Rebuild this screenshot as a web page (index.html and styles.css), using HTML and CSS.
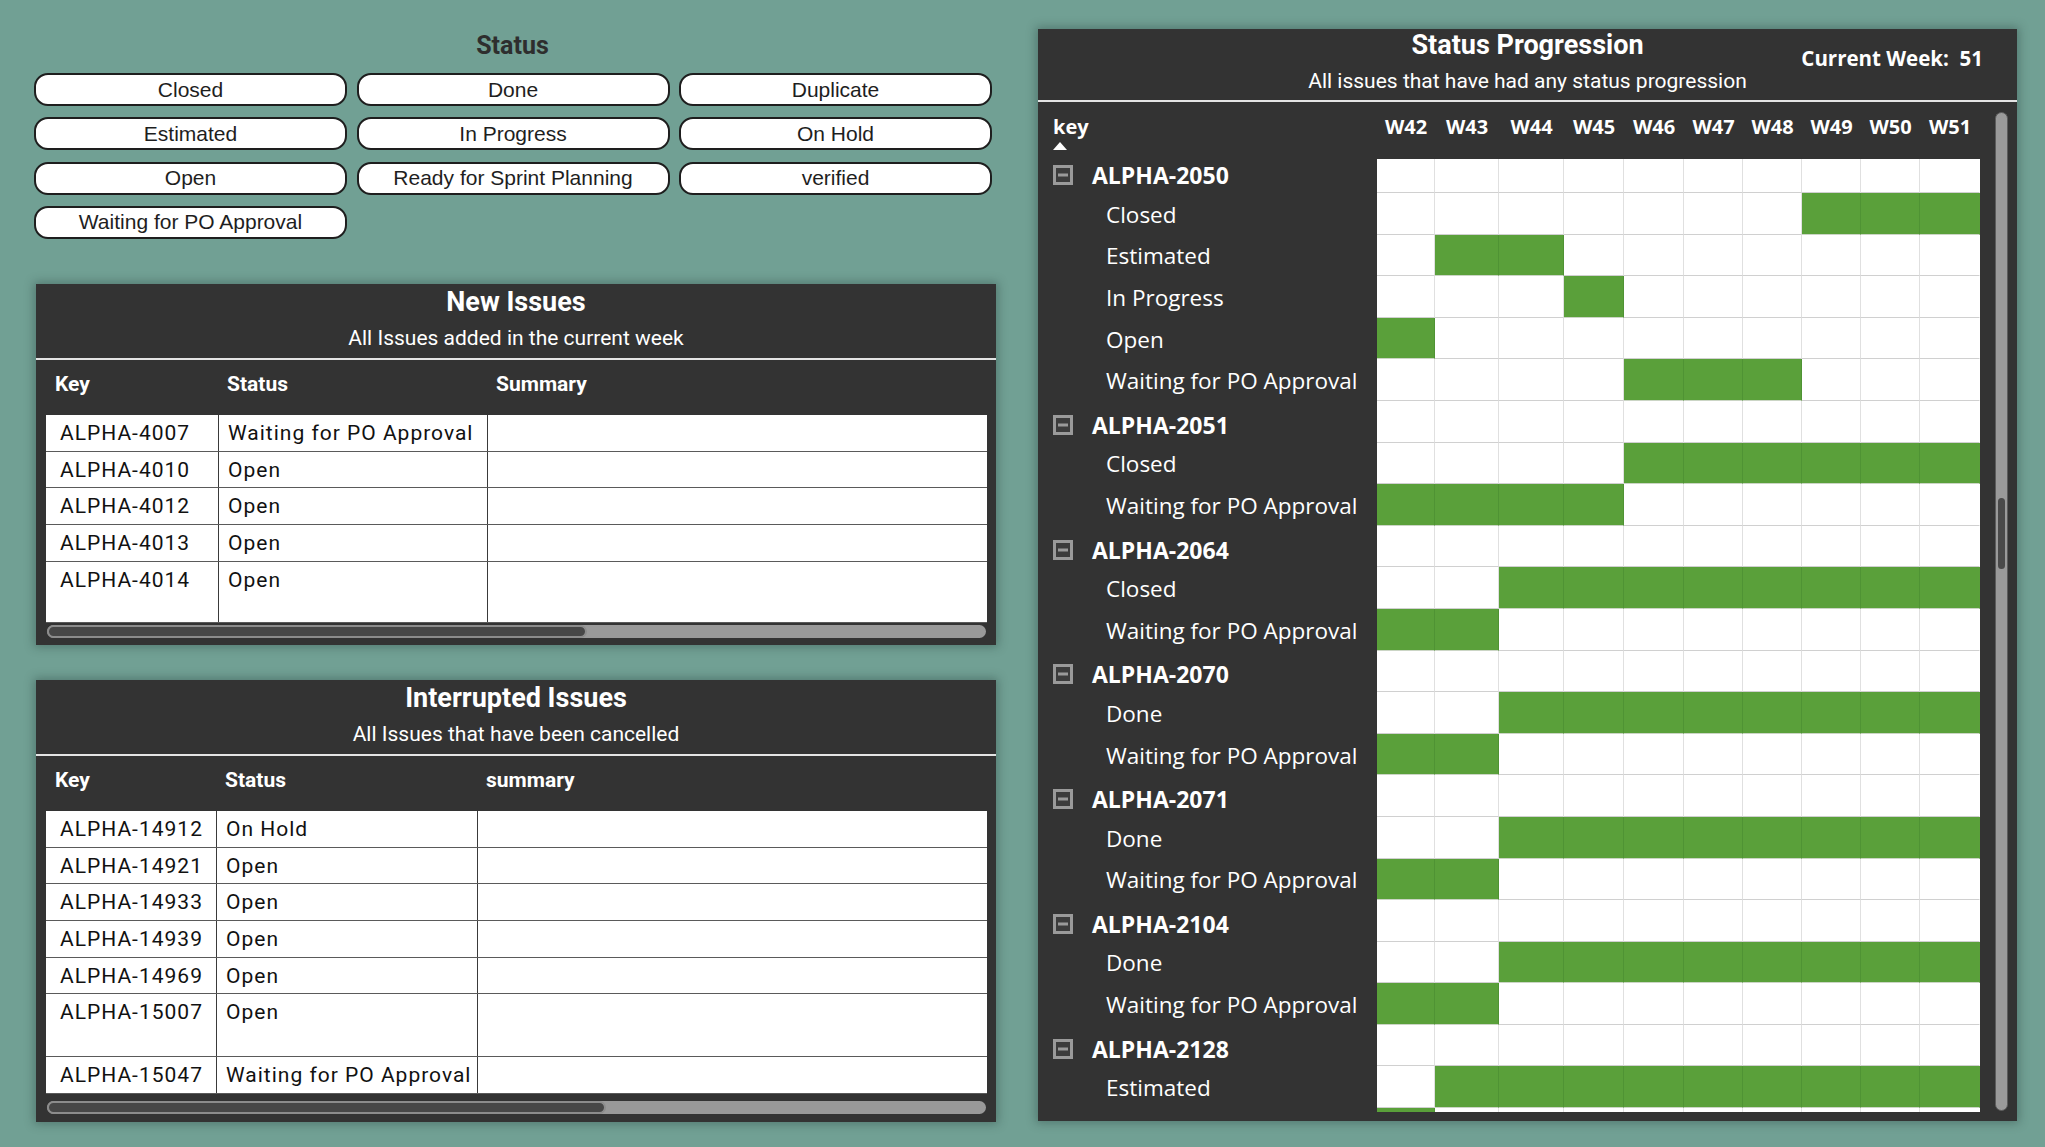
FILE: index.html
```html
<!DOCTYPE html>
<html>
<head>
<meta charset="utf-8">
<title>Status Dashboard</title>
<link rel="stylesheet" href="styles.css">
</head>
<body>
<div class="page">
  <div class="left">
    <section class="slicer">
      <h2 class="slicer-title">Status</h2>
      <div class="chips">
        <div class="chip">Closed</div>
        <div class="chip">Done</div>
        <div class="chip">Duplicate</div>
        <div class="chip">Estimated</div>
        <div class="chip">In Progress</div>
        <div class="chip">On Hold</div>
        <div class="chip">Open</div>
        <div class="chip">Ready for Sprint Planning</div>
        <div class="chip">verified</div>
        <div class="chip">Waiting for PO Approval</div>
      </div>
    </section>

    <section class="panel panel-new">
      <div class="panel-head">
        <h3 class="panel-title">New Issues</h3>
        <p class="panel-sub">All Issues added in the current week</p>
      </div>
      <div class="rule"></div>
      <div class="tbl tbl-new">
        <div class="trow thead"><div class="th">Key</div><div class="th">Status</div><div class="th">Summary</div></div>
        <div class="trow"><div class="td key">ALPHA-4007</div><div class="td">Waiting for PO Approval</div><div class="td"></div></div>
        <div class="trow"><div class="td key">ALPHA-4010</div><div class="td">Open</div><div class="td"></div></div>
        <div class="trow"><div class="td key">ALPHA-4012</div><div class="td">Open</div><div class="td"></div></div>
        <div class="trow"><div class="td key">ALPHA-4013</div><div class="td">Open</div><div class="td"></div></div>
        <div class="trow tall-new"><div class="td key">ALPHA-4014</div><div class="td">Open</div><div class="td"></div></div>
        <div class="hscroll hscroll-new"><div class="hthumb thumb-new"></div></div>
      </div>
    </section>

    <section class="panel panel-int">
      <div class="panel-head">
        <h3 class="panel-title">Interrupted Issues</h3>
        <p class="panel-sub">All Issues that have been cancelled</p>
      </div>
      <div class="rule"></div>
      <div class="tbl tbl-int">
        <div class="trow thead"><div class="th">Key</div><div class="th">Status</div><div class="th">summary</div></div>
        <div class="trow"><div class="td key">ALPHA-14912</div><div class="td">On Hold</div><div class="td"></div></div>
        <div class="trow"><div class="td key">ALPHA-14921</div><div class="td">Open</div><div class="td"></div></div>
        <div class="trow"><div class="td key">ALPHA-14933</div><div class="td">Open</div><div class="td"></div></div>
        <div class="trow"><div class="td key">ALPHA-14939</div><div class="td">Open</div><div class="td"></div></div>
        <div class="trow"><div class="td key">ALPHA-14969</div><div class="td">Open</div><div class="td"></div></div>
        <div class="trow tall-int"><div class="td key">ALPHA-15007</div><div class="td">Open</div><div class="td"></div></div>
        <div class="trow"><div class="td key">ALPHA-15047</div><div class="td">Waiting for PO Approval</div><div class="td"></div></div>
        <div class="hscroll hscroll-int"><div class="hthumb thumb-int"></div></div>
      </div>
    </section>
  </div>

  <section class="panel progress">
    <div class="prog-head">
      <div class="prog-titles">
        <h3 class="panel-title">Status Progression</h3>
        <p class="panel-sub">All issues that have had any status progression</p>
      </div>
      <div class="cur-week">Current Week:&nbsp; 51</div>
    </div>
    <div class="rule"></div>
    <div class="prog-body">
      <div class="matrix">
        <div class="mhead">
          <div class="mkey"><span>key</span><i class="sort-up"></i></div>
          <div class="wk">W42</div><div class="wk">W43</div><div class="wk">W44</div><div class="wk">W45</div><div class="wk">W46</div>
          <div class="wk">W47</div><div class="wk">W48</div><div class="wk">W49</div><div class="wk">W50</div><div class="wk">W51</div>
        </div>
        <div class="mview">
          <div class="mrows">
            <div class="mrow grp"><div class="lbl"><svg class="minus" viewBox="0 0 20 20" width="20" height="20"><rect x="1.5" y="1.5" width="17" height="17" fill="#3c3c3c" stroke="#9a9a9a" stroke-width="3"/><rect x="5" y="8.5" width="10" height="3" fill="#9a9a9a"/></svg><span>ALPHA-2050</span></div><span class="c"></span><span class="c"></span><span class="c"></span><span class="c"></span><span class="c"></span><span class="c"></span><span class="c"></span><span class="c"></span><span class="c"></span><span class="c"></span></div>
            <div class="mrow"><div class="lbl">Closed</div><span class="c"></span><span class="c"></span><span class="c"></span><span class="c"></span><span class="c"></span><span class="c"></span><span class="c"></span><span class="c on"></span><span class="c on"></span><span class="c on"></span></div>
            <div class="mrow"><div class="lbl">Estimated</div><span class="c"></span><span class="c on"></span><span class="c on"></span><span class="c"></span><span class="c"></span><span class="c"></span><span class="c"></span><span class="c"></span><span class="c"></span><span class="c"></span></div>
            <div class="mrow"><div class="lbl">In Progress</div><span class="c"></span><span class="c"></span><span class="c"></span><span class="c on"></span><span class="c"></span><span class="c"></span><span class="c"></span><span class="c"></span><span class="c"></span><span class="c"></span></div>
            <div class="mrow"><div class="lbl">Open</div><span class="c on"></span><span class="c"></span><span class="c"></span><span class="c"></span><span class="c"></span><span class="c"></span><span class="c"></span><span class="c"></span><span class="c"></span><span class="c"></span></div>
            <div class="mrow"><div class="lbl">Waiting for PO Approval</div><span class="c"></span><span class="c"></span><span class="c"></span><span class="c"></span><span class="c on"></span><span class="c on"></span><span class="c on"></span><span class="c"></span><span class="c"></span><span class="c"></span></div>

            <div class="mrow grp"><div class="lbl"><svg class="minus" viewBox="0 0 20 20" width="20" height="20"><rect x="1.5" y="1.5" width="17" height="17" fill="#3c3c3c" stroke="#9a9a9a" stroke-width="3"/><rect x="5" y="8.5" width="10" height="3" fill="#9a9a9a"/></svg><span>ALPHA-2051</span></div><span class="c"></span><span class="c"></span><span class="c"></span><span class="c"></span><span class="c"></span><span class="c"></span><span class="c"></span><span class="c"></span><span class="c"></span><span class="c"></span></div>
            <div class="mrow"><div class="lbl">Closed</div><span class="c"></span><span class="c"></span><span class="c"></span><span class="c"></span><span class="c on"></span><span class="c on"></span><span class="c on"></span><span class="c on"></span><span class="c on"></span><span class="c on"></span></div>
            <div class="mrow"><div class="lbl">Waiting for PO Approval</div><span class="c on"></span><span class="c on"></span><span class="c on"></span><span class="c on"></span><span class="c"></span><span class="c"></span><span class="c"></span><span class="c"></span><span class="c"></span><span class="c"></span></div>

            <div class="mrow grp"><div class="lbl"><svg class="minus" viewBox="0 0 20 20" width="20" height="20"><rect x="1.5" y="1.5" width="17" height="17" fill="#3c3c3c" stroke="#9a9a9a" stroke-width="3"/><rect x="5" y="8.5" width="10" height="3" fill="#9a9a9a"/></svg><span>ALPHA-2064</span></div><span class="c"></span><span class="c"></span><span class="c"></span><span class="c"></span><span class="c"></span><span class="c"></span><span class="c"></span><span class="c"></span><span class="c"></span><span class="c"></span></div>
            <div class="mrow"><div class="lbl">Closed</div><span class="c"></span><span class="c"></span><span class="c on"></span><span class="c on"></span><span class="c on"></span><span class="c on"></span><span class="c on"></span><span class="c on"></span><span class="c on"></span><span class="c on"></span></div>
            <div class="mrow"><div class="lbl">Waiting for PO Approval</div><span class="c on"></span><span class="c on"></span><span class="c"></span><span class="c"></span><span class="c"></span><span class="c"></span><span class="c"></span><span class="c"></span><span class="c"></span><span class="c"></span></div>

            <div class="mrow grp"><div class="lbl"><svg class="minus" viewBox="0 0 20 20" width="20" height="20"><rect x="1.5" y="1.5" width="17" height="17" fill="#3c3c3c" stroke="#9a9a9a" stroke-width="3"/><rect x="5" y="8.5" width="10" height="3" fill="#9a9a9a"/></svg><span>ALPHA-2070</span></div><span class="c"></span><span class="c"></span><span class="c"></span><span class="c"></span><span class="c"></span><span class="c"></span><span class="c"></span><span class="c"></span><span class="c"></span><span class="c"></span></div>
            <div class="mrow"><div class="lbl">Done</div><span class="c"></span><span class="c"></span><span class="c on"></span><span class="c on"></span><span class="c on"></span><span class="c on"></span><span class="c on"></span><span class="c on"></span><span class="c on"></span><span class="c on"></span></div>
            <div class="mrow"><div class="lbl">Waiting for PO Approval</div><span class="c on"></span><span class="c on"></span><span class="c"></span><span class="c"></span><span class="c"></span><span class="c"></span><span class="c"></span><span class="c"></span><span class="c"></span><span class="c"></span></div>

            <div class="mrow grp"><div class="lbl"><svg class="minus" viewBox="0 0 20 20" width="20" height="20"><rect x="1.5" y="1.5" width="17" height="17" fill="#3c3c3c" stroke="#9a9a9a" stroke-width="3"/><rect x="5" y="8.5" width="10" height="3" fill="#9a9a9a"/></svg><span>ALPHA-2071</span></div><span class="c"></span><span class="c"></span><span class="c"></span><span class="c"></span><span class="c"></span><span class="c"></span><span class="c"></span><span class="c"></span><span class="c"></span><span class="c"></span></div>
            <div class="mrow"><div class="lbl">Done</div><span class="c"></span><span class="c"></span><span class="c on"></span><span class="c on"></span><span class="c on"></span><span class="c on"></span><span class="c on"></span><span class="c on"></span><span class="c on"></span><span class="c on"></span></div>
            <div class="mrow"><div class="lbl">Waiting for PO Approval</div><span class="c on"></span><span class="c on"></span><span class="c"></span><span class="c"></span><span class="c"></span><span class="c"></span><span class="c"></span><span class="c"></span><span class="c"></span><span class="c"></span></div>

            <div class="mrow grp"><div class="lbl"><svg class="minus" viewBox="0 0 20 20" width="20" height="20"><rect x="1.5" y="1.5" width="17" height="17" fill="#3c3c3c" stroke="#9a9a9a" stroke-width="3"/><rect x="5" y="8.5" width="10" height="3" fill="#9a9a9a"/></svg><span>ALPHA-2104</span></div><span class="c"></span><span class="c"></span><span class="c"></span><span class="c"></span><span class="c"></span><span class="c"></span><span class="c"></span><span class="c"></span><span class="c"></span><span class="c"></span></div>
            <div class="mrow"><div class="lbl">Done</div><span class="c"></span><span class="c"></span><span class="c on"></span><span class="c on"></span><span class="c on"></span><span class="c on"></span><span class="c on"></span><span class="c on"></span><span class="c on"></span><span class="c on"></span></div>
            <div class="mrow"><div class="lbl">Waiting for PO Approval</div><span class="c on"></span><span class="c on"></span><span class="c"></span><span class="c"></span><span class="c"></span><span class="c"></span><span class="c"></span><span class="c"></span><span class="c"></span><span class="c"></span></div>

            <div class="mrow grp"><div class="lbl"><svg class="minus" viewBox="0 0 20 20" width="20" height="20"><rect x="1.5" y="1.5" width="17" height="17" fill="#3c3c3c" stroke="#9a9a9a" stroke-width="3"/><rect x="5" y="8.5" width="10" height="3" fill="#9a9a9a"/></svg><span>ALPHA-2128</span></div><span class="c"></span><span class="c"></span><span class="c"></span><span class="c"></span><span class="c"></span><span class="c"></span><span class="c"></span><span class="c"></span><span class="c"></span><span class="c"></span></div>
            <div class="mrow"><div class="lbl">Estimated</div><span class="c"></span><span class="c on"></span><span class="c on"></span><span class="c on"></span><span class="c on"></span><span class="c on"></span><span class="c on"></span><span class="c on"></span><span class="c on"></span><span class="c on"></span></div>
            <div class="mrow"><div class="lbl"></div><span class="c on"></span><span class="c"></span><span class="c"></span><span class="c"></span><span class="c"></span><span class="c"></span><span class="c"></span><span class="c"></span><span class="c"></span><span class="c"></span></div>
          </div>
        </div>
      </div>
      <div class="vscroll"><div class="vthumb"></div></div>
    </div>
  </section>
</div>
</body>
</html>
```

FILE: styles.css
```css
html, body {
  margin: 0;
  padding: 0;
}
body {
  width: 2045px;
  height: 1147px;
  overflow: hidden;
  background: #71a094;
  font-family: Roboto, "Liberation Sans", sans-serif;
}
.page {
  display: flex;
  align-items: flex-start;
  padding-left: 34px;
  gap: 42px;
}

/* ---------- left column ---------- */
.left {
  width: 962px;
  display: flex;
  flex-direction: column;
  padding-top: 31px;
}
.slicer-title {
  margin: 0;
  width: 957px;
  text-align: center;
  font: 700 25px/30px Roboto, sans-serif;
  color: #2e2e2e;
}
.chips {
  margin-top: 12px;
  display: grid;
  grid-template-columns: repeat(3, 313px);
  column-gap: 9.5px;
  row-gap: 11.3px;
}
.chip {
  height: 33px;
  box-sizing: border-box;
  border: 2px solid #1e1e1e;
  border-radius: 14px;
  background: #fff;
  display: flex;
  align-items: center;
  justify-content: center;
  font: 21px "Liberation Sans", Arial, sans-serif;
  color: #1e1e1e;
}

.panel {
  background: #333333;
  box-shadow: 0 0 9px 2px rgba(30, 50, 45, 0.35);
  color: #fff;
}
.panel-new {
  margin-top: 45px;
  margin-left: 2px;
  width: 960px;
  height: 361px;
}
.panel-int {
  margin-top: 35px;
  margin-left: 2px;
  width: 960px;
  height: 442px;
}
.panel-head {
  padding-top: 2px;
  text-align: center;
}
.panel-title {
  margin: 0;
  font: 700 27px/32px Roboto, sans-serif;
  color: #fff;
}
.panel-sub {
  margin: 7px 0 0;
  font: 400 21px/26px Roboto, sans-serif;
  color: #fff;
}
.rule {
  height: 2px;
  background: #e4e4e4;
  margin-top: 7px;
}

.tbl {
  margin: 0 9px 0 10px;
  display: flex;
  flex-direction: column;
}
.trow {
  display: grid;
  height: 36.7px;
  box-sizing: border-box;
  background: #fff;
  border-bottom: 1px solid #5a5a5a;
}
.tbl-new .trow { grid-template-columns: 172px 269px 1fr; }
.tbl-int .trow { grid-template-columns: 170px 261px 1fr; }
.trow.thead {
  height: 55px;
  background: #333;
  border-bottom: none;
}
.th {
  padding: 11px 0 0 9px;
  font: 700 21px/26px Roboto, sans-serif;
  color: #fff;
}
.td {
  padding: 5px 0 0 9px;
  font: 400 21px/26px Roboto, sans-serif;
  letter-spacing: 1px;
  color: #111;
  border-left: 1px solid #3a3a3a;
  white-space: nowrap;
}
.td.key {
  border-left: none;
  padding-left: 14px;
}
.trow.tall-new { height: 61px; }
.trow.tall-int { height: 63px; }

.hscroll {
  height: 13px;
  margin: 2px 1px 0;
  background: #999999;
  border-radius: 7px;
}
.hscroll-int { margin-top: 7px; }
.hthumb {
  height: 13px;
  box-sizing: border-box;
  background: #474747;
  border: 2px solid #8c8c8c;
  border-radius: 7px;
}
.thumb-new { width: 540px; }
.thumb-int { width: 559px; }

/* ---------- right panel ---------- */
.progress {
  margin-top: 29px;
  width: 979px;
  height: 1092px;
  display: flex;
  flex-direction: column;
}
.prog-head {
  height: 65px;
  display: grid;
  grid-template-columns: 1fr auto 1fr;
}
.prog-titles {
  grid-column: 2;
  text-align: center;
}
.prog-titles .panel-sub {
  margin-top: 7px;
}
.cur-week {
  grid-column: 3;
  justify-self: end;
  margin: 16.5px 34px 0 0;
  font: 700 20.5px/24px "Open Sans", sans-serif;
  color: #fff;
  white-space: nowrap;
}
.progress .rule {
  margin-top: 6px;
}
.prog-body {
  display: flex;
  align-items: flex-start;
}
.matrix {
  width: 942px;
}
.mhead,
.mrow {
  display: grid;
  grid-template-columns: 339px 58px 64px 65px 60px 60px 59px 59px 59px 59px 60px;
}
.mhead {
  height: 57px;
}
.mkey {
  padding: 13px 0 0 15px;
  display: flex;
  flex-direction: column;
  align-items: flex-start;
  font: 700 20px/24px "Open Sans", sans-serif;
  color: #fff;
}
.sort-up {
  display: block;
  margin-top: 3px;
  width: 0;
  height: 0;
  border-left: 7.5px solid transparent;
  border-right: 7.5px solid transparent;
  border-bottom: 8px solid #fff;
}
.wk {
  padding-top: 13px;
  text-align: center;
  font: 700 20px/24px "Open Sans", sans-serif;
  color: #fff;
}
.mview {
  height: 953px;
  overflow: hidden;
}
.mrows {
  margin-top: -7.6px;
}
.mrow {
  height: 41.6px;
}
.lbl {
  display: flex;
  align-items: center;
  box-sizing: border-box;
  padding: 2px 0 0 68px;
  font: 400 22.5px/28px "Open Sans", sans-serif;
  color: #fff;
  white-space: nowrap;
}
.grp .lbl {
  padding: 6px 0 0 15px;
  font: 700 23px/28px "Open Sans", sans-serif;
}
.minus {
  flex: none;
  margin-right: 19px;
}
.c {
  display: block;
  box-sizing: border-box;
  background: #fff;
  border-right: 1px solid #e0e0e0;
  border-bottom: 1px solid #d0d0d0;
}
.c:last-child {
  border-right-color: #fff;
}
.c.on {
  background: #5aa03a;
  border-right-color: #4f9334;
  border-bottom-color: #cbd5c5;
}
.c.on:last-child {
  border-right-color: #5aa03a;
}
.vscroll {
  flex: none;
  margin: 10px 0 0 15px;
  width: 13px;
  height: 999px;
  box-sizing: border-box;
  background: #9a9a9a;
  border: 1px solid #5c5c5c;
  border-radius: 7px;
  padding-top: 383px;
}
.vthumb {
  width: 100%;
  height: 75px;
  box-sizing: border-box;
  background: #4a4a4a;
  border: 2px solid #9a9a9a;
  border-radius: 6px;
}
```
